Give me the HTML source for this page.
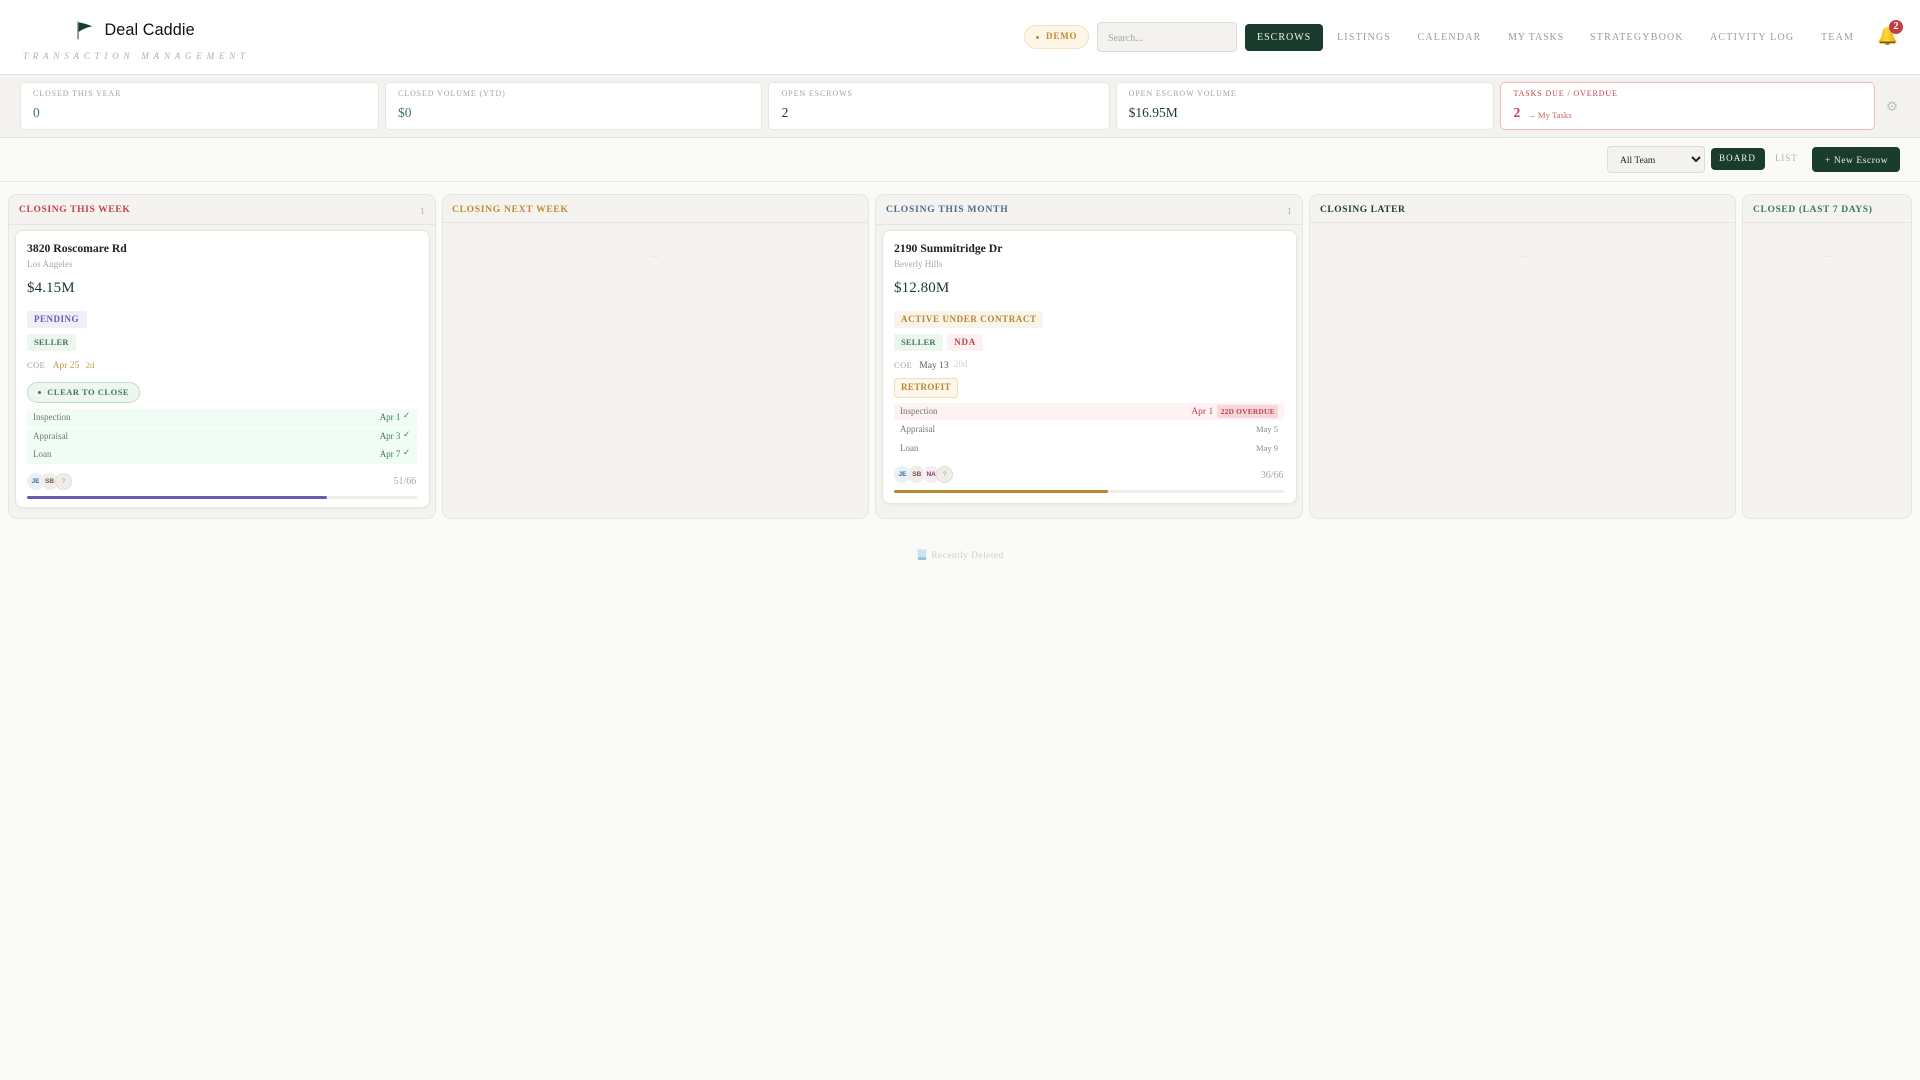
<!DOCTYPE html>
<html lang="en">
<head>
<meta charset="utf-8">
<title>Deal Caddie</title>
<style>
html,body{margin:0;padding:0;width:1920px;height:1080px;overflow:hidden;background:#fafaf8}
body{position:relative;font-family:"Liberation Serif",serif;color:#222}
.b{position:absolute;box-sizing:border-box}
.t{position:absolute;white-space:nowrap;line-height:1;top:calc(var(--b)*1px - .8375em)}
.lbl{font-size:8px;letter-spacing:.88px;color:#a3a3a0;--b:97}
.val{font-size:13.5px;--b:117}
.nav{font-size:10px;letter-spacing:1.2px;color:#9c9c98;--b:41.5}
.stat{background:#fff;border:1px solid #e8e6e0;border-radius:5px;top:82px;height:47.5px}
.col{background:#f4f3ef;border:1px solid #e7e5df;border-radius:9px;top:194px;height:325px}
.colh{left:0;right:0;top:0;border-bottom:1px solid #e7e5df}
.ch{font-size:9.5px;font-weight:bold;--b:214}
.card{background:#fff;border:1px solid #e8e6e0;border-radius:8px;top:230px;box-shadow:0 1px 3px rgba(0,0,0,.05)}
.pill{border-radius:2px;height:17px}
.tag{font-weight:bold;font-size:9px}
.row{border-radius:2px;height:18px}
.s9{font-size:9px}
.g{color:#777773}
.gr{color:#3d7a57}
.av{border-radius:50%;width:17px;height:17px;font:bold 6.5px/17px "Liberation Sans",sans-serif;text-align:center}
.bar{height:3px;background:#f0ede8;border-radius:2px}
.fill{left:0;top:0;height:3px;border-radius:2px}
.dash{width:8px;height:1px;top:256px;background:#ebe9e4}
.ck{font:bold 8.5px/1 'DejaVu Sans',sans-serif;color:#3d7a57;position:absolute;left:403px}
input::placeholder{color:#a8a8a4;opacity:1}
</style>
</head>
<body>

<header class="b" style="left:0;top:0;width:1920px;height:75px;background:#fff;border-bottom:1px solid #e5e3dd"></header>
<svg class="b" style="left:76px;top:20px" width="18" height="20" viewBox="0 0 18 20">
  <rect x="1.4" y="1.6" width="1.3" height="17.6" fill="#55745f"/>
  <path d="M2.6 2.4C7 3 12 4.4 16.2 6.4C12 7.2 7 8.7 2.6 12Z" fill="#1a3c2e"/>
</svg>
<div class="t" style="left:104.5px;font:16.2px/1 'Liberation Sans',sans-serif;letter-spacing:.1px;color:#111;top:21.5px">Deal Caddie</div>
<div class="t" style="left:23px;--b:60;font-size:9px;font-style:italic;letter-spacing:4.8px;color:#aeaeaa">TRANSACTION MANAGEMENT</div>

<div class="b" style="left:1024px;top:25px;width:65px;height:24px;background:#fdf5e8;border:1px solid #f6e2c0;border-radius:12px"></div>
<div class="b" style="left:1035.5px;top:36px;width:3px;height:3px;border-radius:50%;background:#c08a30"></div>
<div class="t" style="left:1046px;--b:40;font-size:9px;font-weight:bold;letter-spacing:.85px;color:#c08a30">DEMO</div>
<input class="b" placeholder="Search..." style="left:1097px;top:22px;width:140px;height:30px;background:#f3f2ee;border:1px solid #dedbd2;border-radius:4px;padding:2px 0 0 10px;font:10px 'Liberation Serif',serif;outline:0">

<div class="b" style="left:1245px;top:24px;width:78px;height:27px;background:#1a3c2e;border-radius:4px"></div>
<nav>
<div class="t nav" style="left:1257px;letter-spacing:1px;color:#f2f2ee">ESCROWS</div>
<div class="t nav" style="left:1337px">LISTINGS</div>
<div class="t nav" style="left:1417.5px">CALENDAR</div>
<div class="t nav" style="left:1508px;letter-spacing:.9px">MY TASKS</div>
<div class="t nav" style="left:1590px">STRATEGYBOOK</div>
<div class="t nav" style="left:1710px">ACTIVITY LOG</div>
<div class="t nav" style="left:1821px">TEAM</div>
</nav>
<svg class="b" style="left:1878px;top:27px" width="19" height="18" viewBox="0 0 19 18">
  <defs><linearGradient id="bg" x1="0" x2="1" y1="0" y2="0"><stop offset="0" stop-color="#f5ae0c"/><stop offset=".45" stop-color="#ffd83a"/><stop offset="1" stop-color="#f0a208"/></linearGradient></defs>
  <path d="M9.5 .3C6.2 .3 4.4 2.6 4 6.5C3.7 10 2.6 12.2 .3 14.4L1.6 16.5H17.4L18.7 14.4C16.4 12.2 15.3 10 15 6.5C14.6 2.6 12.8 .3 9.5 .3Z" fill="url(#bg)"/>
  <rect x="2" y="14.6" width="15" height="1.6" fill="#6e5210"/>
  <ellipse cx="9.5" cy="16.9" rx="2.2" ry="1.1" fill="#b9770e"/>
</svg>
<div class="b" style="left:1889px;top:20px;width:14px;height:14px;border-radius:50%;background:#c0404a;color:#fff;font:bold 10.5px/14px 'Liberation Serif',serif;text-align:center">2</div>

<section class="b" style="left:0;top:75px;width:1920px;height:63px;background:#f3f2ee;border-bottom:1px solid #e5e3dd"></section>
<div class="b stat" style="left:20px;width:358.5px"></div>
<div class="b stat" style="left:385px;width:377px"></div>
<div class="b stat" style="left:768px;width:342px"></div>
<div class="b stat" style="left:1116px;width:378px"></div>
<div class="b stat" style="left:1500px;width:375px;border-color:#f0b9bd"></div>
<div class="t lbl" style="left:33px">CLOSED THIS YEAR</div>
<div class="t val" style="left:33px;color:#3d7a57">0</div>
<div class="t lbl" style="left:398px">CLOSED VOLUME (YTD)</div>
<div class="t val" style="left:398px;color:#3d7a57">$0</div>
<div class="t lbl" style="left:781.6px">OPEN ESCROWS</div>
<div class="t val" style="left:781.6px;color:#1a3c2e">2</div>
<div class="t lbl" style="left:1128.6px">OPEN ESCROW VOLUME</div>
<div class="t val" style="left:1128.6px;color:#1a3c2e">$16.95M</div>
<div class="t lbl" style="left:1513.5px;color:#c8404a">TASKS DUE / OVERDUE</div>
<div class="t val" style="left:1513.5px;color:#c8404a;font-weight:bold">2</div>
<div class="t" style="left:1527px;--b:118;font-size:8.7px;color:#d0606a">→ My Tasks</div>
<div class="t" style="left:1886px;font:13.5px/1 'DejaVu Sans',sans-serif;color:#c2c2bd;top:101px">⚙</div>

<div class="b" style="left:0;top:138px;width:1920px;height:44px;border-bottom:1px solid #e8e6e0"></div>
<select class="b" style="left:1607px;top:146px;width:98px;height:27px;background:#f3f2ee;border:1px solid #e0dcd2;border-radius:4px;font:9.5px 'Liberation Serif',serif;color:#222;padding:2px 0 0 8px;outline:0"><option>All Team</option></select>
<div class="b" style="left:1711px;top:148px;width:54px;height:22px;background:#1a3c2e;border-radius:4px"></div>
<div class="t s9" style="left:1719px;--b:162;letter-spacing:1.1px;color:#f2f2ee">BOARD</div>
<div class="t s9" style="left:1775px;--b:162;letter-spacing:.9px;color:#aeaeaa">LIST</div>
<div class="b" style="left:1812px;top:147px;width:88px;height:25px;background:#1a3c2e;border-radius:4px"></div>
<div class="t" style="left:1825px;--b:165;font-size:9.5px;letter-spacing:.55px;color:#f0f0ec">+ New Escrow</div>

<!-- columns -->
<div class="b col" style="left:8px;width:428px"><div class="b colh" style="height:30px"></div></div>
<div class="b col" style="left:442px;width:427px"><div class="b colh" style="height:28px"></div></div>
<div class="b col" style="left:875px;width:428px"><div class="b colh" style="height:30px"></div></div>
<div class="b col" style="left:1309px;width:427px"><div class="b colh" style="height:28px"></div></div>
<div class="b col" style="left:1742px;width:170px"><div class="b colh" style="height:28px"></div></div>
<div class="t ch" style="left:19px;letter-spacing:.64px;color:#c8404a">CLOSING THIS WEEK</div>
<div class="t ch" style="left:452px;letter-spacing:.73px;color:#c08a30">CLOSING NEXT WEEK</div>
<div class="t ch" style="left:886px;letter-spacing:.8px;color:#4a6d8e">CLOSING THIS MONTH</div>
<div class="t ch" style="left:1320px;letter-spacing:.55px;color:#1a3c2e">CLOSING LATER</div>
<div class="t ch" style="left:1753px;letter-spacing:.63px;color:#3d7a57">CLOSED (LAST 7 DAYS)</div>
<div class="t" style="left:420px;--b:215;font-size:9px;color:#a8a8a4">1</div>
<div class="t" style="left:1287px;--b:215;font-size:9px;color:#a8a8a4">1</div>
<div class="b dash" style="left:651px"></div>
<div class="b dash" style="left:1518px"></div>
<div class="b dash" style="left:1823px"></div>

<!-- card 1 -->
<article class="b card" style="left:14.5px;width:415px;height:278px"></article>
<div class="t" style="left:27px;--b:253;font-size:11.7px;font-weight:bold;color:#222">3820 Roscomare Rd</div>
<div class="t s9" style="left:27px;--b:268;color:#a8a8a4;letter-spacing:.07px">Los Angeles</div>
<div class="t" style="left:27px;--b:294;font-size:15px;letter-spacing:.1px;color:#1a3c2e">$4.15M</div>
<div class="b pill" style="left:27px;top:311px;width:60px;background:#f0eef8"></div>
<div class="t tag" style="left:34px;--b:323;letter-spacing:.5px;color:#6a5aae">PENDING</div>
<div class="b pill" style="left:27px;top:334px;width:49px;background:#eef6f0"></div>
<div class="t" style="left:34px;--b:345;font-size:8.5px;font-weight:bold;letter-spacing:.2px;color:#3d7a57">SELLER</div>
<div class="t" style="left:27px;--b:368;font-size:8.5px;letter-spacing:.4px;color:#9c9c98">COE</div>
<div class="t" style="left:52.7px;--b:369.5;font-size:9.5px;color:#c89a4a">Apr 25</div>
<div class="t" style="left:85.7px;--b:368;font-size:8.5px;color:#c89a4a">2d</div>
<div class="b" style="left:27px;top:382px;width:113px;height:21px;background:#eef6f0;border:1px solid #bfdcc9;border-radius:11px"></div>
<div class="b" style="left:38px;top:391px;width:3px;height:3px;border-radius:50%;background:#3d7a57"></div>
<div class="t" style="left:47.3px;--b:395;font-size:8.5px;font-weight:bold;letter-spacing:.5px;color:#3d7a57">CLEAR TO CLOSE</div>
<div class="b row" style="left:27px;top:409px;width:390px;background:#f0fdf4"></div>
<div class="b row" style="left:27px;top:427.5px;width:390px;background:#f0fdf4"></div>
<div class="b row" style="left:27px;top:446px;width:390px;background:#f0fdf4"></div>
<div class="t s9 g" style="left:33px;--b:421">Inspection</div>
<div class="t s9 g" style="left:33px;--b:440">Appraisal</div>
<div class="t s9 g" style="left:33px;--b:458">Loan</div>
<div class="t s9 gr" style="left:379.7px;--b:421">Apr 1</div>
<div class="t s9 gr" style="left:379.7px;--b:440">Apr 3</div>
<div class="t s9 gr" style="left:379.7px;--b:458">Apr 7</div>
<div class="ck" style="top:412px">✓</div>
<div class="ck" style="top:431px">✓</div>
<div class="ck" style="top:449px">✓</div>
<div class="b av" style="left:27px;top:473px;background:#eaf0f6;color:#3b6a94">JE</div>
<div class="b av" style="left:41px;top:473px;background:#f0ede8;color:#6b5c40">SB</div>
<div class="b av" style="left:55px;top:473px;background:#f0ede8;color:#999;border:1px solid #e2dfd8;line-height:15px;font-weight:normal">?</div>
<div class="t" style="left:393.5px;--b:485;font-size:10px;color:#a8a8a4">51/66</div>
<div class="b bar" style="left:27px;top:496px;width:390px"><div class="b fill" style="width:300px;background:#6a5aae"></div></div>

<!-- card 3 -->
<article class="b card" style="left:881.5px;width:415px;height:274px"></article>
<div class="t" style="left:894px;--b:253;font-size:11.7px;font-weight:bold;color:#222">2190 Summitridge Dr</div>
<div class="t s9" style="left:894px;--b:268;color:#a8a8a4">Beverly Hills</div>
<div class="t" style="left:894px;--b:294;font-size:15px;letter-spacing:.1px;color:#1a3c2e">$12.80M</div>
<div class="b pill" style="left:894px;top:311px;width:149px;background:#f8f4ea"></div>
<div class="t tag" style="left:901px;--b:323;letter-spacing:.6px;color:#b8862e">ACTIVE UNDER CONTRACT</div>
<div class="b pill" style="left:894px;top:334px;width:49px;background:#eef6f0"></div>
<div class="t" style="left:901px;--b:345;font-size:8.5px;font-weight:bold;letter-spacing:.2px;color:#3d7a57">SELLER</div>
<div class="b pill" style="left:947px;top:334px;width:36px;background:#fdf0f0"></div>
<div class="t tag" style="left:954.3px;--b:346;letter-spacing:.7px;color:#c8404a">NDA</div>
<div class="t" style="left:894px;--b:368;font-size:8.5px;letter-spacing:.4px;color:#9c9c98">COE</div>
<div class="t" style="left:919.3px;--b:369.5;font-size:9.5px;color:#5a5a56">May 13</div>
<div class="t s9" style="left:954px;--b:368;color:#cfcfcb">20d</div>
<div class="b" style="left:894px;top:378px;width:64px;height:20px;background:#fdf6ea;border:1px solid #f3dcae;border-radius:3px"></div>
<div class="t tag" style="left:901px;--b:391;letter-spacing:.35px;color:#b8862e">RETROFIT</div>
<div class="b row" style="left:894px;top:403px;width:390px;height:17px;background:#fef2f2"></div>
<div class="t s9 g" style="left:900px;--b:415">Inspection</div>
<div class="t" style="left:1191.3px;--b:416;font-size:9.5px;color:#c8404a">Apr 1</div>
<div class="b" style="left:1217px;top:405px;width:61px;height:13px;background:#f6d6d9;border-radius:2px"></div>
<div class="t" style="left:1220.7px;--b:414;font-size:7.5px;font-weight:bold;letter-spacing:.16px;color:#c8404a">22D OVERDUE</div>
<div class="t s9 g" style="left:900px;--b:433">Appraisal</div>
<div class="t s9 g" style="left:900px;--b:452">Loan</div>
<div class="t" style="left:1256px;--b:432;font-size:8.5px;color:#8a8a86">May 5</div>
<div class="t" style="left:1256px;--b:451;font-size:8.5px;color:#8a8a86">May 9</div>
<div class="b av" style="left:894px;top:466px;background:#eaf0f6;color:#3b6a94">JE</div>
<div class="b av" style="left:908.3px;top:466px;background:#f0ede8;color:#6b5c40">SB</div>
<div class="b av" style="left:922.7px;top:466px;background:#f5edf1;color:#8e3a60">NA</div>
<div class="b av" style="left:936px;top:466px;background:#f0ede8;color:#999;border:1px solid #e2dfd8;line-height:15px;font-weight:normal">?</div>
<div class="t" style="left:1260.7px;--b:479;font-size:10px;color:#a8a8a4">36/66</div>
<div class="b bar" style="left:894px;top:490px;width:390px"><div class="b fill" style="width:214px;background:#b8862e"></div></div>

<!-- footer -->
<svg class="b" style="left:917px;top:549px" width="10" height="11" viewBox="0 0 10 11">
  <defs><pattern id="h" width="1.6" height="1.6" patternUnits="userSpaceOnUse"><rect width="1.6" height="1.6" fill="#d6e8ee"/><rect width=".8" height=".8" fill="#b4d6e2"/></pattern></defs>
  <path d="M.3 .4H9.7L8.9 11H1.1Z" fill="url(#h)"/>
  <path d="M.9 8H9.1L8.9 11H1.1Z" fill="#93c6d9"/>
</svg>
<div class="t" style="left:931.3px;--b:560;font-size:9.5px;letter-spacing:.42px;color:#cdcdc9">Recently Deleted</div>

</body>
</html>
